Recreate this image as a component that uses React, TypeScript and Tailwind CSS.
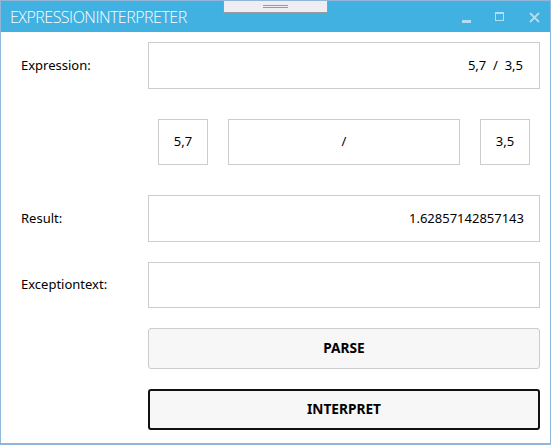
import React from "react";

const font = { fontFamily: '"Noto Sans", "Open Sans", sans-serif' };

function Box({ children, className = "" }: { children?: React.ReactNode; className?: string }) {
  return (
    <div className={`border border-[#cccccc] bg-white flex items-center text-[13px] text-black ${className}`}>
      {children}
    </div>
  );
}

export default function App() {
  return (
    <div className="w-[551px] h-[445px] bg-white border-x border-t border-b-2 border-[#90b6d8] flex flex-col overflow-hidden" style={font}>
      {/* title bar */}
      <div className="relative h-[31px] bg-[#41b1e1] flex items-center shrink-0">
        <span className="pl-[9px] text-white text-[16px] font-light tracking-[-0.5px] leading-none" style={{ fontFamily: '"Open Sans", "Noto Sans", sans-serif' }}>
          EXPRESSIONINTERPRETER
        </span>
        <div className="absolute left-[222px] top-[-1px] w-[105px] h-[13px] bg-[#eeedf2] border border-[#9a9a9a] flex flex-col items-center justify-center gap-[1px]">
          <div className="w-[25px] h-px bg-[#9a9a9a]" />
          <div className="w-[25px] h-px bg-[#9a9a9a]" />
        </div>
        <div className="ml-auto flex items-center h-full pr-[10px]">
          <div className="w-[9px] h-[3px] bg-[#b2def2] mt-[9px] mr-[24px]" />
          <div className="w-[9px] h-[9px] border border-t-2 border-[#b2def2] mr-[25px]" />
          <svg width="11" height="11" viewBox="0 0 11 11" className="mt-[1px]">
            <path d="M1 1 L10 10 M10 1 L1 10" stroke="#b2def2" strokeWidth="1.8" />
          </svg>
        </div>
      </div>

      {/* content */}
      <div className="flex flex-col pt-[10px]">
        <div className="flex items-center">
          <div className="w-[147px] pl-[20px] text-[13px] text-black">Expression:</div>
          <Box className="w-[392px] h-[47px] justify-end pr-[16px] whitespace-pre">5,7  /  3,5</Box>
        </div>

        <div className="flex items-center mt-[30px]">
          <div className="w-[147px]" />
          <div className="w-[392px] flex items-center gap-5 px-[10px]">
            <Box className="w-[50px] h-[46px] justify-center">5,7</Box>
            <Box className="w-[232px] h-[46px] justify-center">/</Box>
            <Box className="w-[50px] h-[46px] justify-center">3,5</Box>
          </div>
        </div>

        <div className="flex items-center mt-[30px]">
          <div className="w-[147px] pl-[20px] text-[13px] text-black">Result:</div>
          <Box className="w-[392px] h-[47px] justify-end pr-[15px]">1.62857142857143</Box>
        </div>

        <div className="flex items-center mt-[20px]">
          <div className="w-[147px] pl-[20px] text-[13px] text-black">Exceptiontext:</div>
          <Box className="w-[392px] h-[46px]" />
        </div>

        <div className="flex mt-[20px]">
          <div className="w-[147px]" />
          <button className="w-[392px] h-[41px] bg-[#f7f7f7] border border-[#cccccc] rounded-[3px] text-[13.7px] font-bold text-black">
            PARSE
          </button>
        </div>

        <div className="flex mt-[20px]">
          <div className="w-[147px]" />
          <button className="w-[392px] h-[41px] bg-[#f7f7f7] border-2 border-[#111111] rounded-[3px] text-[13.7px] font-bold text-black">
            INTERPRET
          </button>
        </div>
      </div>
    </div>
  );
}
